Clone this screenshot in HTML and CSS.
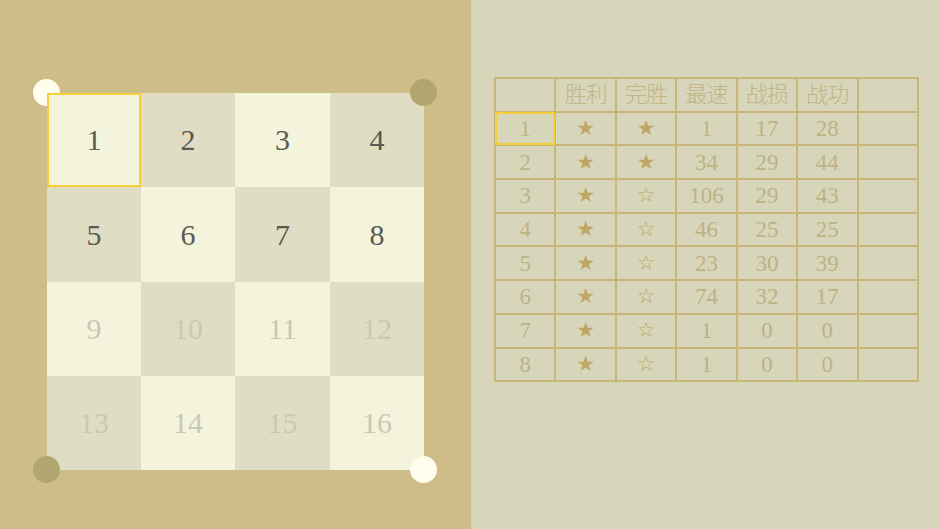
FILE: index.html
```html
<!DOCTYPE html>
<html>
<head>
<meta charset="utf-8">
<link rel="stylesheet" href="styles.css">
</head>
<body>
<div class="app">
  <div class="left">
    <div class="board">
      <span class="dot dot-tl"></span>
      <div class="grid">
        <div class="cell light sel">1</div>
        <div class="cell dark">2</div>
        <div class="cell light">3</div>
        <div class="cell dark">4</div>
        <div class="cell dark">5</div>
        <div class="cell light">6</div>
        <div class="cell dark">7</div>
        <div class="cell light">8</div>
        <div class="cell light dim">9</div>
        <div class="cell dark dim">10</div>
        <div class="cell light dim">11</div>
        <div class="cell dark dim">12</div>
        <div class="cell dark dim">13</div>
        <div class="cell light dim">14</div>
        <div class="cell dark dim">15</div>
        <div class="cell light dim">16</div>
      </div>
      <span class="dot dot-tr"></span>
      <span class="dot dot-bl"></span>
      <span class="dot dot-br"></span>
    </div>
  </div>
  <div class="right">
    <table class="stats">
      <tr class="head"><th></th><th>胜利</th><th>完胜</th><th>最速</th><th>战损</th><th>战功</th><th></th></tr>
      <tr><td class="sel">1</td><td class="star">★</td><td class="star">★</td><td>1</td><td>17</td><td>28</td><td></td></tr>
      <tr><td>2</td><td class="star">★</td><td class="star">★</td><td>34</td><td>29</td><td>44</td><td></td></tr>
      <tr><td>3</td><td class="star">★</td><td class="star">☆</td><td>106</td><td>29</td><td>43</td><td></td></tr>
      <tr><td>4</td><td class="star">★</td><td class="star">☆</td><td>46</td><td>25</td><td>25</td><td></td></tr>
      <tr><td>5</td><td class="star">★</td><td class="star">☆</td><td>23</td><td>30</td><td>39</td><td></td></tr>
      <tr><td>6</td><td class="star">★</td><td class="star">☆</td><td>74</td><td>32</td><td>17</td><td></td></tr>
      <tr><td>7</td><td class="star">★</td><td class="star">☆</td><td>1</td><td>0</td><td>0</td><td></td></tr>
      <tr><td>8</td><td class="star">★</td><td class="star">☆</td><td>1</td><td>0</td><td>0</td><td></td></tr>
    </table>
  </div>
</div>
</body>
</html>
```
FILE: styles.css
```css
* { box-sizing: border-box; }
html, body {
  margin: 0;
  padding: 0;
  width: 940px;
  height: 529px;
  overflow: hidden;
}
.app {
  display: flex;
  width: 940px;
  height: 529px;
}
.left {
  width: 471px;
  height: 529px;
  background: #cfbd89;
  padding: 93px 0 0 47px;
}
.right {
  flex: 1;
  background: #d7d6bb;
  padding: 77px 0 0 23px;
}
.board {
  position: relative;
  width: 377px;
  height: 377px;
}
.grid {
  display: grid;
  grid-template-columns: 94px 94px 95px 94px;
  grid-template-rows: 94px 95px 94px 94px;
  width: 377px;
  height: 377px;
  position: relative;
}
.cell {
  display: flex;
  align-items: center;
  justify-content: center;
  font-family: "Liberation Serif", "DejaVu Serif", serif;
  font-size: 30px;
  color: #5a5a50;
}
.cell.light { background: #f4f4dd; }
.cell.dark { background: #dfdec5; }
.cell.dim { color: #c9c9b3; }
.cell.sel { border: 2px solid #f4cf3a; }
.dot {
  position: absolute;
  width: 27px;
  height: 27px;
  border-radius: 50%;
}
.dot-tl { left: -14px; top: -14px; background: #fffdeb; z-index: 0; }
.dot-tr { left: 363px; top: -14px; background: #b2a66f; z-index: 2; }
.dot-bl { left: -14px; top: 363px; background: #b2a66f; z-index: 2; }
.dot-br { left: 363px; top: 363px; background: #fffdeb; z-index: 2; }
.stats {
  border-collapse: collapse;
  border: 2px solid #c2ad6e;
  width: 425px;
  table-layout: fixed;
}
.stats th, .stats td {
  border: 2px solid #c8b578;
  height: 33.7px;
  padding: 0;
  text-align: center;
  font-family: "Liberation Serif", "DejaVu Serif", serif;
  font-size: 23px;
  font-weight: normal;
  color: #bfb186;
  line-height: 1;
}
.stats th {
  font-family: "Liberation Serif", "Noto Sans CJK SC", serif;
  font-weight: 300;
  font-size: 22px;
  letter-spacing: -1px;
  color: #c2b484;
}
.stats td.star {
  color: #bea765;
  font-family: "DejaVu Sans", sans-serif;
  font-size: 21px;
}
.stats td.sel {
  outline: 2px solid #f4cf3a;
  outline-offset: -2px;
}
```
